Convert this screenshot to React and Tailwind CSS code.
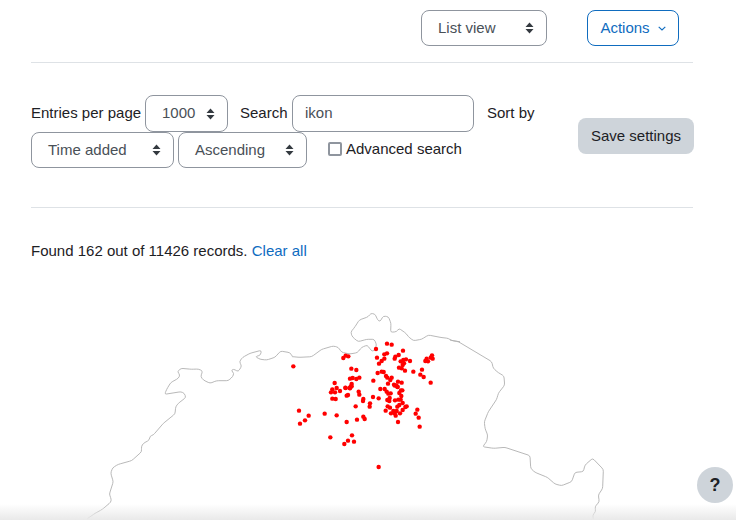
import React from 'react';

const font = "[font-family:'Liberation_Sans',Arial,sans-serif]";

// outline of the map, traced in page pixels
const west = [[52,536],[75,520],[97,508],[122,487],[124,478],[118,462],[130,425],[122,400],[128,383],[145,373],[185,362],[215,335],[214,320],[220,310],[238,300],[240,288],[250,285],[280,250],[315,222],[317,200],[325,190],[348,172],[343,160],[333,155],[284,163],[290,148],[303,127],[325,115],[330,105],[322,95],[333,85],[365,88],[385,87],[398,93],[392,110],[400,120],[420,130],[440,122],[475,122],[488,110],[492,100],[484,92],[490,87],[505,95],[515,78],[508,65],[518,52],[540,40],[574,31],[572,45],[556,50],[570,58],[590,60],[615,52],[632,33],[660,38],[668,50]].map(([x, y]) => [70 + x / 3, 340 + y / 3]);
const north = [[0,155],[30,158],[36,170],[60,172],[95,170],[125,148],[160,138],[175,142],[185,157],[210,162],[232,158],[245,142],[262,135],[272,150],[280,155],[290,135],[283,118],[260,118],[235,125],[218,112],[212,97],[225,80],[238,60],[265,50],[272,40],[285,42],[293,60],[300,65],[310,48],[325,50],[333,70],[332,97],[350,95],[357,85],[378,100],[385,110],[400,122],[425,118],[445,105],[480,112],[505,115],[515,122],[540,125]].map(([x, y]) => [280 + x / 3, 300 + y / 3]);
const east = [[60,0],[85,5],[185,65],[190,85],[205,98],[222,108],[224,135],[205,160],[200,178],[175,215],[163,245],[165,265],[173,285],[170,305],[158,320],[190,325],[225,322],[300,347],[302,385],[315,397],[352,412],[375,432],[395,437],[425,425],[435,397],[460,395],[465,375],[488,355],[520,388],[518,445],[505,465],[508,485],[495,500],[497,515],[488,525],[490,538]].map(([x, y]) => [430 + x / 3, 340 + y / 3]);

const upperDots = [[40,199],[190,174],[197,167],[205,169],[288,147],[321,131],[335,134],[369,152],[321,160],[313,163],[291,173],[313,176],[305,183],[297,191],[356,165],[346,170],[344,176],[362,184],[370,180],[378,178],[390,183],[372,190],[368,195],[357,203],[365,205],[375,212],[400,215],[426,209],[421,224],[431,231],[440,176],[436,183],[444,184],[456,166],[452,173],[458,176],[214,206],[229,210],[293,219],[305,215],[311,216],[318,228],[322,233],[335,233],[331,240],[238,233],[229,237],[218,234],[210,236],[280,242],[324,251],[354,245],[365,248],[342,254],[349,256],[353,261],[452,248],[164,249],[215,252],[212,259],[209,264],[197,264]].map(([x, y]) => [280 + x / 3, 300 + y / 3]);
const lowerDots = [[157,13],[170,9],[180,18],[153,22],[165,22],[196,8],[210,10],[215,4],[236,20],[238,29],[204,30],[200,32],[157,41],[167,42],[250,42],[249,48],[279,36],[296,40],[270,55],[269,65],[227,64],[301,12],[314,12],[320,20],[325,26],[332,25],[363,16],[367,16],[358,24],[364,33],[329,39],[322,45],[328,48],[345,46],[355,44],[362,44],[368,54],[358,60],[352,65],[323,64],[330,68],[317,77],[380,64],[376,66],[368,75],[340,78],[350,78],[333,85],[344,85],[347,92],[360,85],[412,74],[407,86],[416,98],[419,125],[354,111],[57,77],[134,86],[86,92],[75,106],[60,116],[170,91],[200,111],[231,104],[250,95],[254,102],[151,157],[216,151],[222,170],[204,167],[193,177],[296,246],[345,2],[352,5]].map(([x, y]) => [280 + x / 3, 385 + y / 3]);

// the svg starts at y=270 on the page
const MAP_TOP = 270;

// keeps the traced points, only the last 2px either side of each corner is rounded
const toward = (a, b, dist) => {
  const len = Math.hypot(b[0] - a[0], b[1] - a[1]) || 1;
  const t = Math.min(dist / len, 0.5);
  return [a[0] + (b[0] - a[0]) * t, a[1] + (b[1] - a[1]) * t];
};
const fmt = ([x, y]) => `${x.toFixed(1)} ${y.toFixed(1)}`;
const toPath = (pts) => {
  const p = pts.map(([x, y]) => [x, y - MAP_TOP]);
  let d = `M${fmt(p[0])}`;
  for (let i = 1; i < p.length - 1; i++) {
    d += ` L${fmt(toward(p[i], p[i - 1], 2))} Q${fmt(p[i])} ${fmt(toward(p[i], p[i + 1], 2))}`;
  }
  return `${d} L${fmt(p[p.length - 1])}`;
};

function Carets() {
  return (
    <svg width="9" height="14" viewBox="0 0 9 14" className="shrink-0">
      <path d="M4.5 1.5 8.5 6H.5z M4.5 12.5.5 8h8z" fill="#343a40" />
    </svg>
  );
}

function Select({ label, className }) {
  return (
    <div className={`flex items-center justify-between rounded-lg border border-[#8f959e] bg-white pl-4 pr-[12px] text-[15px] text-[#495057] ${className}`}>
      <span>{label}</span>
      <Carets />
    </div>
  );
}

function MapView() {
  return (
    <svg width="736" height="255" className="block">
      <g fill="none" stroke="#b0b0b0" strokeWidth="0.9" strokeLinejoin="round">
        <path d={toPath([...west, ...north.slice(2)])} />
        <path d={toPath(east)} />
      </g>
      <g fill="#ff0000">
        {[...upperDots, ...lowerDots].map(([x, y], i) => (
          <circle key={i} cx={x} cy={y - MAP_TOP} r="2.2" />
        ))}
      </g>
    </svg>
  );
}

export default function App() {
  return (
    <div className={`relative h-[525px] w-[736px] overflow-hidden bg-white text-[15px] text-[#1d2125] ${font}`}>
      {/* Top bar */}
      <div className="ml-[31px] mr-[43px] flex h-[63px] justify-end border-b border-[#dee2e6] pt-[10px] pr-[14px]">
        <Select label="List view" className="h-[36px] w-[126px]" />
        <div className="ml-[40px] flex h-[36px] w-[92px] items-center justify-center gap-[8px] rounded-lg border border-[#0f6cbf] text-[#0f6cbf]">
          Actions
          <svg width="8" height="5" viewBox="0 0 8 5">
            <path d="M.7.8 4 4l3.3-3.2" fill="none" stroke="#0f6cbf" strokeWidth="1.1" />
          </svg>
        </div>
      </div>

      {/* Settings form */}
      <div className="ml-[31px] mr-[43px] flex h-[145px] items-start justify-between border-b border-[#dee2e6] pt-[32px]">
        <div className="w-[520px]">
          <div className="flex h-[37px] items-center whitespace-nowrap">
            <span className="w-[110px]">Entries per page</span>
            <Select label="1000" className="ml-[4px] h-[37px] w-[83px]" />
            <span className="ml-[12px] w-[48px]">Search</span>
            <div className="ml-[4px] flex h-[37px] w-[182px] items-center rounded-lg border border-[#8f959e] pl-[12px] text-[#495057]">ikon</div>
            <span className="ml-[13px]">Sort by</span>
          </div>
          <div className="flex h-[36px] items-center whitespace-nowrap">
            <Select label="Time added" className="h-[36px] w-[143px]" />
            <Select label="Ascending" className="ml-[4px] h-[36px] w-[129px]" />
            <span className="ml-[21px] h-[14px] w-[14px] -translate-y-[1px] rounded-[2px] border-2 border-[#8f959e] bg-white" />
            <span className="ml-[4px] -translate-y-[1px]">Advanced search</span>
          </div>
        </div>
        <div className="-mr-[1px] mt-[23px] flex h-[36px] w-[116px] items-center justify-center rounded-lg bg-[#ced4da]">Save settings</div>
      </div>

      {/* Result count */}
      <p className="mx-[31px] mt-[34px] h-[28px] leading-[18px]">
        Found 162 out of 11426 records. <span className="text-[#0f6cbf]">Clear all</span>
      </p>

      <MapView />

      {/* Help button */}
      <div className="absolute left-[697px] top-[467px] flex h-[36px] w-[36px] items-center justify-center rounded-full bg-[#ced4da] text-[18px] font-bold">?</div>

      {/* Bottom fade */}
      <div className="absolute bottom-[5px] left-0 h-[16px] w-full bg-gradient-to-b from-white/0 to-[#e9e9e9]" />
      <div className="absolute bottom-0 left-0 h-[5px] w-full bg-white" />
    </div>
  );
}
